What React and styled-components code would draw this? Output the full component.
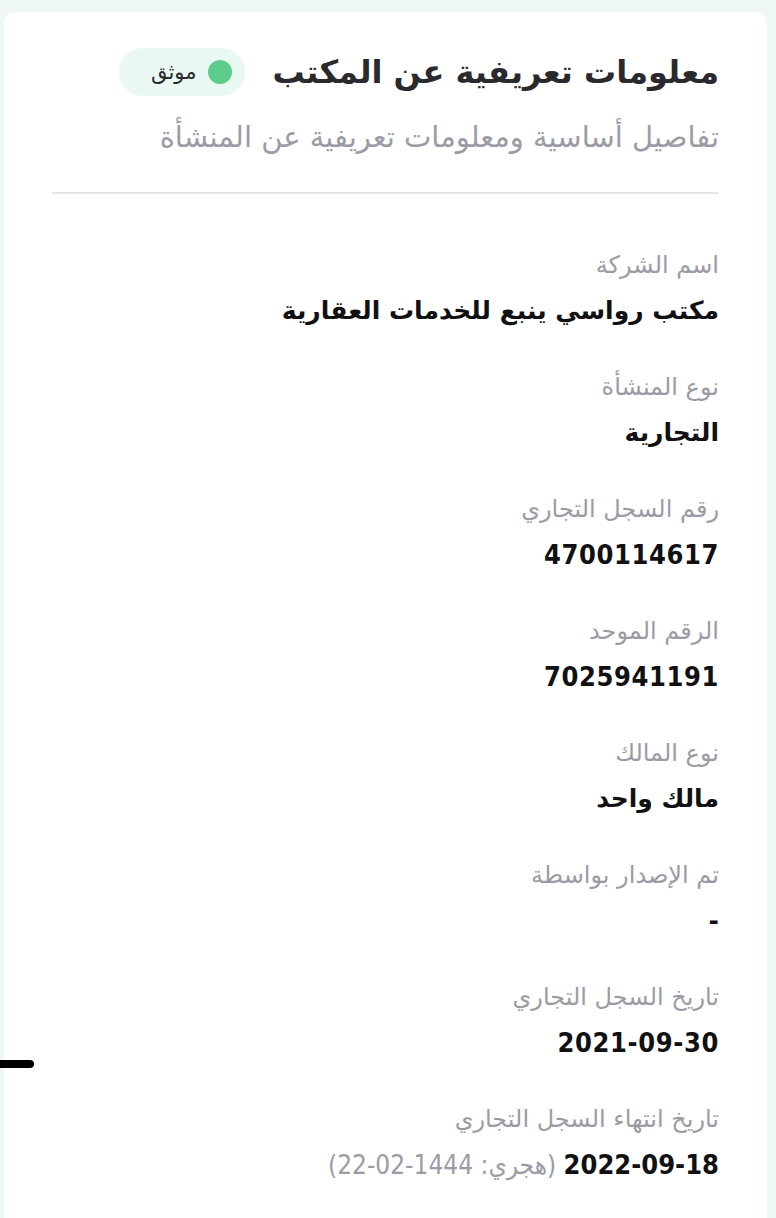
import React from 'react'
import styled, { createGlobalStyle } from 'styled-components'

const GlobalStyle = createGlobalStyle`
  html, body {
    margin: 0;
    padding: 0;
    background: #eef7f6;
  }
  body {
    font-family: "DejaVu Sans", "Noto Sans", sans-serif;
  }
`;

const Page = styled.div`
  position: relative;
  height: 1218px;
  overflow: hidden;
  padding: 12px 9px 0 4px;
  box-sizing: border-box;
`;

const Card = styled.section`
  direction: rtl;
  background: #ffffff;
  border-radius: 10px;
  padding: 36px 48px 0 48px;
  min-height: 1300px;
  box-sizing: border-box;
`;

const HeaderRow = styled.div`
  display: flex;
  align-items: center;
  gap: 27px;
`;

const Title = styled.h2`
  margin: 0;
  font-size: 32px;
  font-weight: 700;
  color: #2a2a2e;
  line-height: 48px;
`;

const Badge = styled.span`
  display: inline-flex;
  align-items: center;
  gap: 12px;
  height: 48px;
  padding: 0 13px 0 32px;
  border-radius: 24px;
  background: #e9f8f2;
  font-size: 21px;
  color: #2a2a2e;
`;

const Dot = styled.span`
  width: 24px;
  height: 24px;
  border-radius: 50%;
  background: #5ccb8b;
`;

const Subtitle = styled.p`
  margin: 23px 0 0;
  font-size: 29px;
  color: #9b9ba6;
  line-height: 36px;
`;

const Divider = styled.hr`
  border: 0;
  height: 2px;
  background: #e6e6e8;
  margin: 37px 0 0;
`;

const FieldList = styled.dl`
  margin: 53px 0 0;
  display: flex;
  flex-direction: column;
  gap: 38px;
`;

const Field = styled.div`
  display: flex;
  flex-direction: column;
  gap: 8px;
`;

const Label = styled.dt`
  font-size: 24px;
  color: #9b9ba6;
  line-height: 36px;
`;

const Value = styled.dd`
  margin: 0;
  font-size: ${p => (p.$numeric ? '27px' : '25px')};
  font-weight: 700;
  color: #111114;
  line-height: 40px;
  font-family: ${p => (p.$numeric ? '"DejaVu Sans Condensed", "DejaVu Sans", sans-serif' : 'inherit')};
  font-stretch: ${p => (p.$numeric ? 'condensed' : 'normal')};
  letter-spacing: ${p => (p.$numeric ? '0.6px' : '0')};
`;

const Muted = styled.span`
  font-weight: 400;
  font-size: 26px;
  color: #9b9ba6;
  letter-spacing: 0;
`;

const ScrollMark = styled.div`
  position: absolute;
  left: 0;
  top: 1060px;
  width: 34px;
  height: 8px;
  border-radius: 0 4px 4px 0;
  background: #000;
`;

const fields = [
  { label: 'اسم الشركة', value: 'مكتب رواسي ينبع للخدمات العقارية' },
  { label: 'نوع المنشأة', value: 'التجارية' },
  { label: 'رقم السجل التجاري', value: '4700114617', numeric: true },
  { label: 'الرقم الموحد', value: '7025941191', numeric: true },
  { label: 'نوع المالك', value: 'مالك واحد' },
  { label: 'تم الإصدار بواسطة', value: '-' },
  { label: 'تاريخ السجل التجاري', value: '2021-09-30', numeric: true },
  { label: 'تاريخ انتهاء السجل التجاري', value: '2022-09-18', numeric: true, hijri: '22-02-1444' },
];

export default function App() {
  return (
    <Page>
      <GlobalStyle />
      <Card>
        <HeaderRow>
          <Title>معلومات تعريفية عن المكتب</Title>
          <Badge>
            <Dot />
            موثق
          </Badge>
        </HeaderRow>
        <Subtitle>تفاصيل أساسية ومعلومات تعريفية عن المنشأة</Subtitle>
        <Divider />
        <FieldList>
          {fields.map(f => (
            <Field key={f.label}>
              <Label>{f.label}</Label>
              <Value $numeric={f.numeric}>
                {f.value}
                {f.hijri && <Muted> (هجري: <bdi>{f.hijri}</bdi>)</Muted>}
              </Value>
            </Field>
          ))}
        </FieldList>
      </Card>
      <ScrollMark />
    </Page>
  )
}
